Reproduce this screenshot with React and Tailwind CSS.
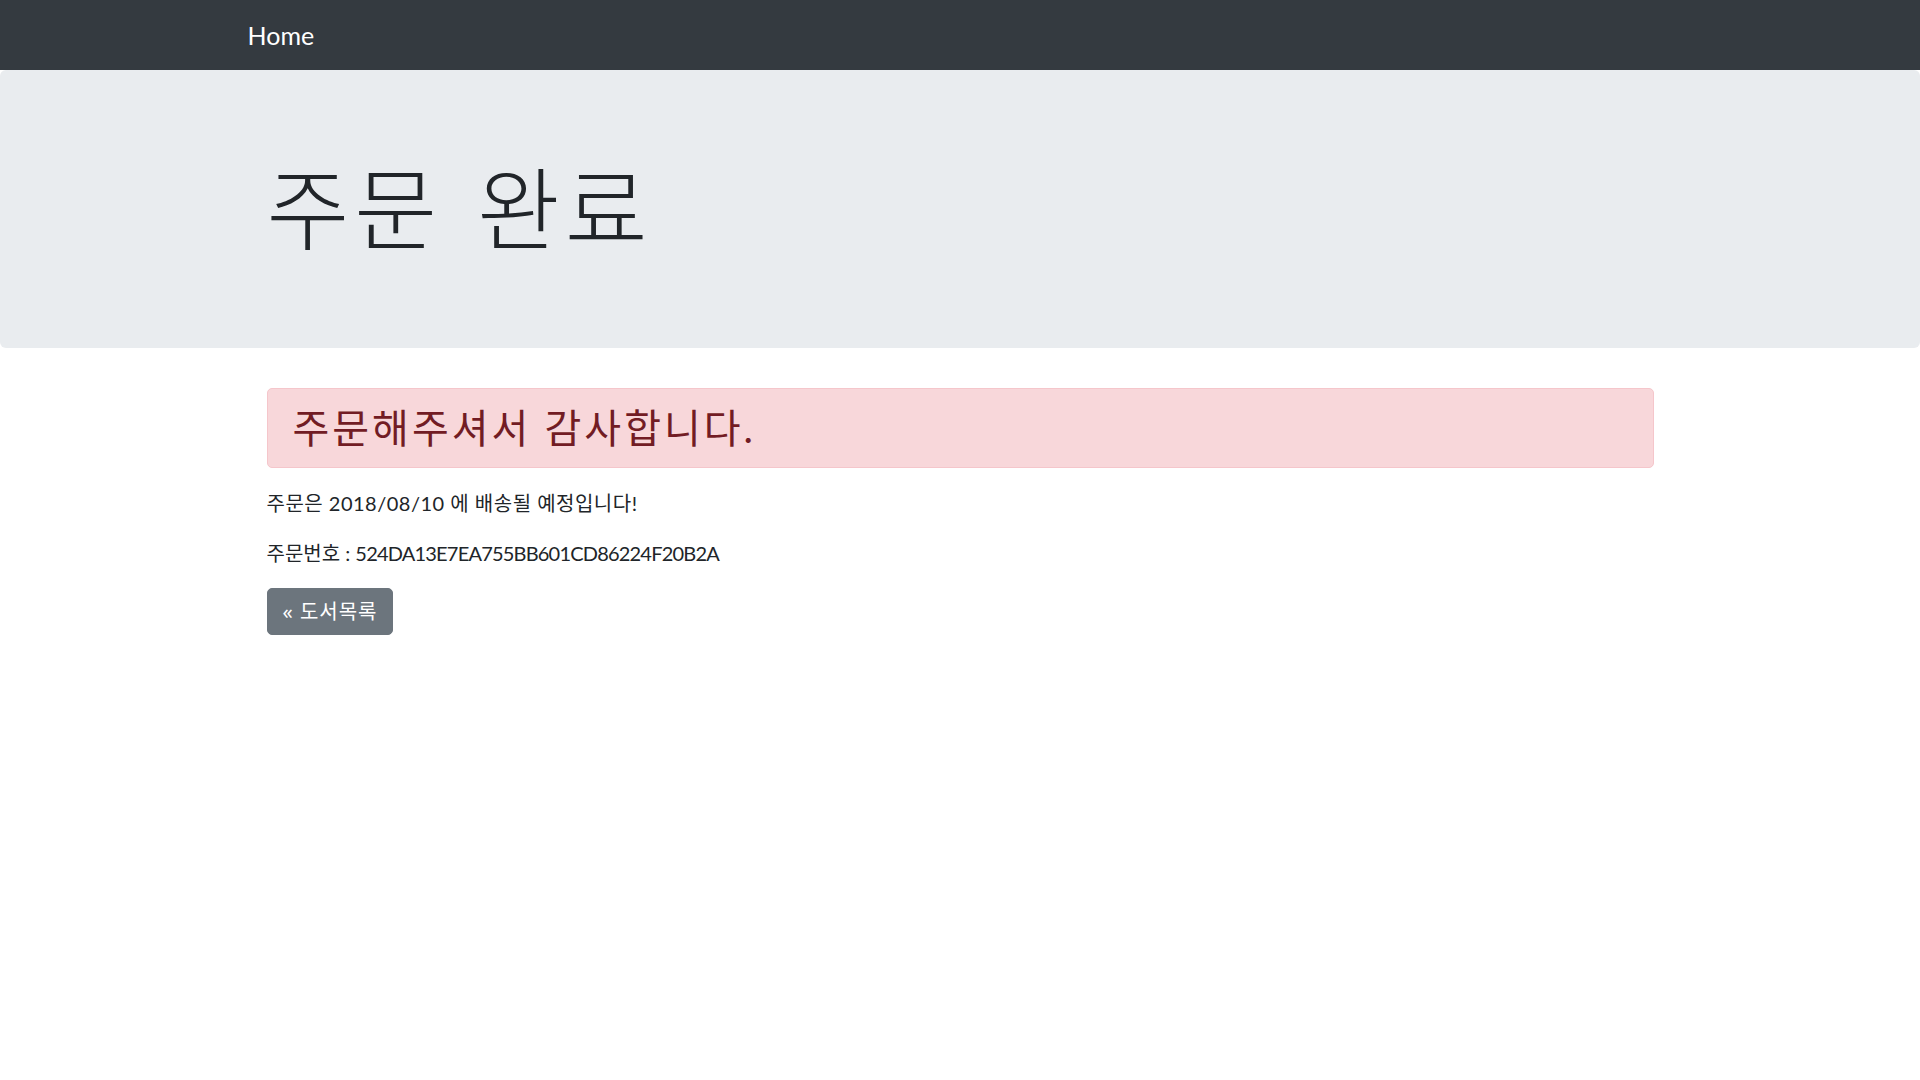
export default function App() {
  const font = { fontFamily: 'Lato, "Noto Sans CJK KR", sans-serif' };
  return (
    <div className="min-h-screen bg-white text-[#212529]" style={font}>
      <nav className="h-[70px] bg-[#343a40]">
        <div className="mx-auto flex h-full w-[1425px] items-center">
          <a className="text-[25px] leading-[38px] text-white">Home</a>
        </div>
      </nav>

      <div className="mb-[40px] rounded-[6px] bg-[#e9ecef] py-[80px]">
        <div className="mx-auto w-[1425px] px-[19px]">
          <h1
            className="mb-[10px] text-[90px] font-light leading-[108px] tracking-[5px] [word-spacing:10px]"
            style={{ fontFamily: '"Noto Sans CJK KR", sans-serif' }}
          >
            주문 완료
          </h1>
        </div>
      </div>

      <div className="mx-auto w-[1425px] px-[19px]">
        <div className="mb-[20px] rounded-[5px] border border-[#f5c6cb] bg-[#f8d7da] px-[25px] py-[15px] text-[#721c24]">
          <h2 className="text-[40px] font-normal leading-[48px] tracking-[3px]">주문해주셔서 감사합니다.</h2>
        </div>
        <p className="mb-[20px] text-[20px] leading-[30px] tracking-[0.5px]">주문은 2018/08/10 에 배송될 예정입니다!</p>
        <p className="mb-[20px] text-[20px] leading-[30px]">
          주문번호 : <span className="tracking-[-0.8px]">524DA13E7EA755BB601CD86224F20B2A</span>
        </p>
        <a
          className="inline-block rounded-[5px] border border-[#6c757d] bg-[#6c757d] px-[15px] py-[7.5px] text-[20px] leading-[30px] tracking-[1px] text-white"
          style={{ fontFamily: '"Noto Sans", "Noto Sans CJK KR", sans-serif' }}
        >
          « 도서목록
        </a>
      </div>
    </div>
  );
}
